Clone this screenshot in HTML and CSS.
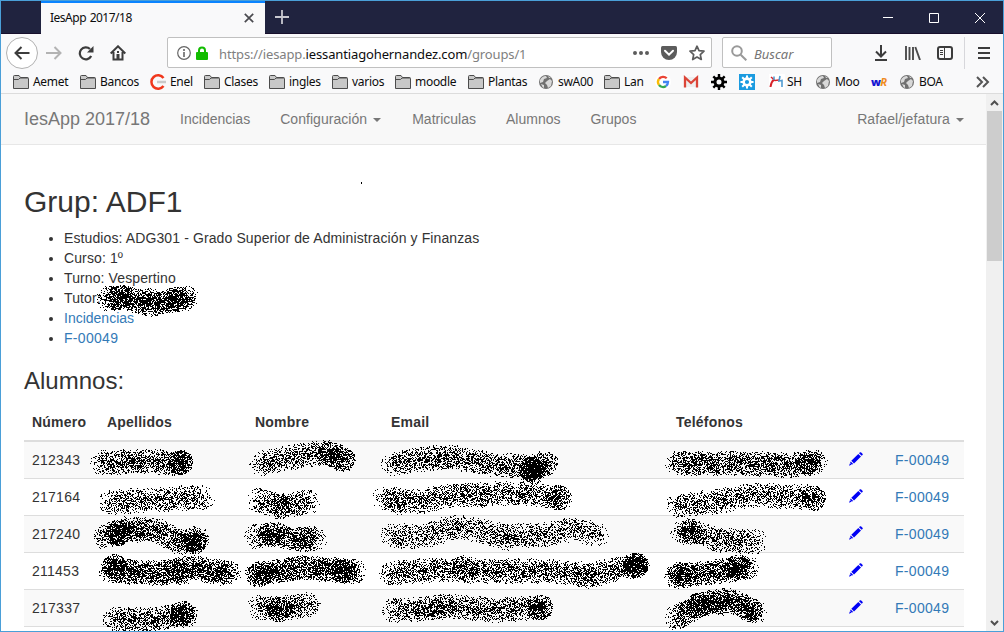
FILE: index.html
```html
<!DOCTYPE html>
<html lang="es">
<head>
<meta charset="utf-8">
<title>IesApp 2017/18</title>
<link rel="stylesheet" href="styles.css">
</head>
<body>
<svg class="defs" width="0" height="0">
  <symbol id="folder" viewBox="0 0 16 16"><path d="M.5 14.500V2.500Q.5 1.500 1.500 1.500H6L7.500 3.500H14.500Q15.500 3.500 15.500 4.500V14.500Z" fill="#c8c8c8" stroke="#4c4c4c"/><path d="M1 5.500H5.500L7 4H15" fill="none" stroke="#4c4c4c"/></symbol>
  <symbol id="globe" viewBox="0 0 16 16"><circle cx="8" cy="8" r="7" fill="#707070"/><path d="M2 6Q4 2 8 2L9 4 6 5 5 8 2 9ZM9 7L12 5 14 7 13 12 10 14 9 11 7 9ZM3 10L6 11 6 14Q4 13 3 10ZM10 2L13 4 11 4Z" fill="#d8d8d8"/></symbol>
  <symbol id="gear" viewBox="0 0 16 16"><circle cx="8" cy="8" r="4" fill="none" stroke="currentColor" stroke-width="3"/><path d="M8 0V4M8 12V16M0 8H4M12 8H16M2.300 2.300L5 5M11 11L13.700 13.700M2.300 13.700L5 11M11 5L13.700 2.300" stroke="currentColor" stroke-width="2.400"/></symbol>
  <symbol id="pencil" viewBox="0 0 14 14"><path d="M2.300 8.700L9.300 1.900 12 4.600 5 11.500ZM10 1.200L11 .3Q11.600 -.1 12.200 .5L13.500 1.800Q14 2.400 13.500 3L12.700 3.800ZM1.700 9.500L4.200 12 0 13.800Z" fill="#0000f5"/><path d="M1.500 11.500L2.500 12.500" stroke="#fff" stroke-width=".8"/></symbol>
</svg>
<div class="window">
  <div class="tabbar">
    <div class="tab"><span class="tab-title">IesApp 2017/18</span><svg width="10" height="10"><path d="M.8 .8L9.200 9.200M9.200 .8L.8 9.200" stroke="#4a4a4f" stroke-width="1.700"/></svg></div>
    <svg class="newtab" width="14" height="14"><path d="M7 0V14M0 7H14" stroke="#c8c8d0" stroke-width="1.800"/></svg>
    <div class="controls">
      <svg width="10" height="10"><path d="M0 4.500H10" stroke="#fff"/></svg>
      <svg width="10" height="10"><path d="M.5 .5H9.500V9.500H.5Z" fill="none" stroke="#fff"/></svg>
      <svg width="10" height="10"><path d="M0 0L10 10M10 0L0 10" stroke="#fff"/></svg>
    </div>
  </div>
  <div class="toolbar">
    <span class="back"><svg width="16" height="16"><path d="M15.500 8H1.500M7.500 2L1.500 8 7.500 14" fill="none" stroke="#3c3c3c" stroke-width="2"/></svg></span>
    <svg class="forward" width="16" height="16"><path d="M0 8H14.500M8.500 2L14.500 8 8.500 14" fill="none" stroke="#b3b3b3" stroke-width="2"/></svg>
    <svg class="reload" width="16" height="16"><path d="M13.200 11A6 6 0 1 1 12 4" fill="none" stroke="#3c3c3c" stroke-width="2.200"/><path d="M15.500 1V7.500H9Z" fill="#3c3c3c"/></svg>
    <svg class="home" width="16" height="16"><path d="M.7 8.500L8 1.300 15.300 8.500M3.500 7V14.500H12.500V7" fill="none" stroke="#3c3c3c" stroke-width="2"/><path d="M6.500 14V9H9.500V14M7 6H9V8H7Z" fill="#3c3c3c"/></svg>
    <div class="urlbar">
      <svg width="14" height="14"><circle cx="7" cy="7" r="6.300" fill="none" stroke="#666" stroke-width="1.200"/><path d="M7 3V5M7 6V11" stroke="#666" stroke-width="1.600"/></svg>
      <svg class="lock" width="12" height="14"><path d="M3 7V4.500A3 3 0 0 1 9 4.500V7" fill="none" stroke="#12bc00" stroke-width="2"/><rect y="6" width="12" height="8" rx="1" fill="#12bc00"/></svg>
      <span class="url">https://iesapp.<b>iessantiagohernandez.com</b>/groups/1</span>
      <svg class="dots" width="16" height="4"><path d="M0 2A2 2 0 0 1 4 2 2 2 0 0 1 0 2M6 2A2 2 0 0 1 10 2 2 2 0 0 1 6 2M12 2A2 2 0 0 1 16 2 2 2 0 0 1 12 2" fill="#5c5c5c"/></svg>
      <svg class="pocket" width="16" height="14"><path d="M1.500 0H14.500Q16 0 16 1.500V6A8 8 0 0 1 0 6V1.500Q0 0 1.500 0Z" fill="#5c5c5c"/><path d="M4 4.800L8 8.600 12 4.800" fill="none" stroke="#fff" stroke-width="2" stroke-linecap="round"/></svg>
      <svg width="16" height="16"><path d="M8 1.200L10 5.700 15 6.200 11.300 9.600 12.300 14.500 8 12 3.700 14.500 4.700 9.600 1 6.200 6 5.700Z" fill="none" stroke="#5c5c5c" stroke-width="1.700" stroke-linejoin="round"/></svg>
    </div>
    <div class="search"><svg width="16" height="16"><circle cx="6" cy="6" r="4.800" fill="none" stroke="#999" stroke-width="2"/><path d="M9.700 9.700L15.300 15.300" stroke="#999" stroke-width="2"/></svg><i>Buscar</i></div>
    <svg class="download" width="14" height="16"><path d="M7 0V11M2 6.500L7 11.500 12 6.500M1 15H13" fill="none" stroke="#3c3c3c" stroke-width="2"/></svg>
    <svg class="library" width="16" height="14"><path d="M1 0V14M4.500 1V14M8 1V14M10.300 1L15 14" stroke="#4c4c4c" stroke-width="1.900"/></svg>
    <svg class="sidebar" width="16" height="14"><rect x="1" y="1" width="14" height="12" rx="2" fill="none" stroke="#3c3c3c" stroke-width="2"/><path d="M7.500 1V13M3 4.500H6M3 6.500H6M3 8.500H6" stroke="#3c3c3c"/></svg>
    <span class="separator"></span>
    <svg class="menu" width="12" height="12"><path d="M0 1H12M0 6H12M0 11H12" stroke="#3c3c3c" stroke-width="2"/></svg>
  </div>
  <div class="bookmarks">
    <span><svg><use href="#folder"/></svg>Aemet</span>
    <span><svg><use href="#folder"/></svg>Bancos</span>
    <span><svg viewBox="0 0 16 16"><path d="M13.500 12A6.700 6.700 0 1 1 13.500 4" fill="none" stroke="#f0371c" stroke-width="2.500"/><path d="M7 8H16" stroke="#c9c9c9" stroke-width="2.500"/></svg>Enel</span>
    <span><svg><use href="#folder"/></svg>Clases</span>
    <span><svg><use href="#folder"/></svg>ingles</span>
    <span><svg><use href="#folder"/></svg>varios</span>
    <span><svg><use href="#folder"/></svg>moodle</span>
    <span><svg><use href="#folder"/></svg>Plantas</span>
    <span><svg><use href="#globe"/></svg>swA00</span>
    <span><svg><use href="#folder"/></svg>Lan</span>
    <span><svg viewBox="0 0 16 16"><circle cx="8" cy="8" r="8" fill="#fff"/><g fill="none" stroke-width="2.300"><path d="M4 5A5 5 0 0 1 11.700 4.300" stroke="#ea4335"/><path d="M4 5A5 5 0 0 0 4 11" stroke="#fbbc05"/><path d="M4 11A5 5 0 0 0 11 12" stroke="#34a853"/><path d="M11 12A5 5 0 0 0 13 8H8" stroke="#4285f4"/></g></svg></span>
    <span><svg viewBox="0 0 16 16"><path d="M1 3H15V13H1Z" fill="#eee"/><path d="M2 13.500V3.500L8 9 14 3.500V13.500" fill="none" stroke="#db4437" stroke-width="2.300"/></svg></span>
    <span><svg class="gear-dark"><use href="#gear"/></svg></span>
    <span><svg class="gear-blue" viewBox="-1.500 -1.500 19 19"><use href="#gear" width="16" height="16"/></svg></span>
    <span class="school"><svg viewBox="0 0 16 16"><path d="M0 0H16V16H0Z" fill="#fff"/><path d="M1.500 13Q2 8 5 5.500" fill="none" stroke="#d8232a" stroke-width="2"/><path d="M2 3L6 6.500 10 6" fill="none" stroke="#d8232a" stroke-width="1.500"/><path d="M5 2.500V6M11 2L10 7 13 6.500V13" fill="none" stroke="#519bd1" stroke-width="1.600"/></svg>SH</span>
    <span><svg><use href="#globe"/></svg>Moo</span>
    <span class="wr"><b>w</b><em>R</em></span>
    <span><svg><use href="#globe"/></svg>BOA</span>
    <svg class="overflow" viewBox="0 0 14 12"><path d="M1 1L6 6 1 11M7 1L12 6 7 11" fill="none" stroke="#555" stroke-width="2"/></svg>
  </div>
  <div class="viewport">
    <div class="page">
      <nav class="navbar">
        <a class="brand">IesApp 2017/18</a><a>Incidencias</a><a class="config">Configuración<s class="caret"></s></a><a>Matriculas</a><a>Alumnos</a><a>Grupos</a><a class="user">Rafael/jefatura<s class="caret"></s></a>
      </nav>
      <main class="content">
        <h2>Grup: ADF1</h2>
        <ul>
          <li>Estudios: ADG301 - Grado Superior de Administración y Finanzas</li>
          <li>Curso: 1º</li>
          <li>Turno: Vespertino</li>
          <li>Tutor:</li>
          <li><a class="incidents">Incidencias</a></li>
          <li><a class="form">F-00049</a></li>
        </ul>
        <h3>Alumnos:</h3>
        <table>
          <colgroup><col class="c-num"><col class="c-last"><col class="c-first"><col class="c-mail"><col class="c-tel"><col class="c-edit"><col></colgroup>
          <thead><tr><th>Número</th><th>Apellidos</th><th>Nombre</th><th>Email</th><th>Teléfonos</th><th></th><th></th></tr></thead>
          <tbody>
            <tr><td>212343</td><td></td><td></td><td></td><td></td><td><svg class="pencil"><use href="#pencil"/></svg></td><td><a class="form">F-00049</a></td></tr>
            <tr><td>217164</td><td></td><td></td><td></td><td></td><td><svg class="pencil"><use href="#pencil"/></svg></td><td><a class="form">F-00049</a></td></tr>
            <tr><td>217240</td><td></td><td></td><td></td><td></td><td><svg class="pencil"><use href="#pencil"/></svg></td><td><a class="form">F-00049</a></td></tr>
            <tr><td>211453</td><td></td><td></td><td></td><td></td><td><svg class="pencil"><use href="#pencil"/></svg></td><td><a class="form">F-00049</a></td></tr>
            <tr><td>217337</td><td></td><td></td><td></td><td></td><td><svg class="pencil"><use href="#pencil"/></svg></td><td><a class="form">F-00049</a></td></tr>
            <tr><td></td><td></td><td></td><td></td><td></td><td></td><td></td></tr>
          </tbody>
        </table>
      </main>
    </div>
    <div class="scrollbar">
      <svg width="9" height="6"><path d="M1 5L4.500 1.500 8 5" fill="none" stroke="#505050" stroke-width="2"/></svg>
      <div class="thumb"></div>
      <svg class="down" width="9" height="6"><path d="M1 1L4.500 4.500 8 1" fill="none" stroke="#505050" stroke-width="2"/></svg>
    </div>
  </div>
</div>
<svg class="spray" width="1004" height="631" shape-rendering="crispEdges"><path id="ink"/></svg>
<script src="spray.js"></script>
</body>
</html>
```
FILE: styles.css
```css
* { box-sizing: border-box; }
body { margin: 0; background: #fff; font: 14px/20px "Liberation Sans", Arial, sans-serif; color: #333; overflow: hidden; }
svg { display: block; flex: none; }
.defs { position: absolute; }
.window { width: 1004px; height: 632px; border: 1px solid #4a9fd8; display: flex; flex-direction: column; overflow: hidden; }
.tabbar, .toolbar, .bookmarks { font-family: "Noto Sans", sans-serif; font-size: 12px; flex: none; display: flex; align-items: center; }
.tabbar { height: 33px; background: #20233f; border-bottom: 1px solid #170f2c; padding-left: 40px; }
.tab { height: 33px; width: 224px; background: #f9f9fa; border-top: 2px solid #0a84ff; display: flex; align-items: center; justify-content: space-between; padding: 0 11px 2px 9px; color: #0c0c0d; align-self: flex-start; }
.tab-title { letter-spacing: -.5px; word-spacing: 1px; }
.newtab { margin-left: 10px; }
.controls { margin-left: auto; display: flex; gap: 36px; margin-right: 18px; padding-top: 2px; }
.toolbar { height: 37px; background: #f9f9fa; padding-left: 5px; }
.back { width: 32px; height: 32px; border: 1px solid #b1b1b1; border-radius: 50%; background: #fff; display: grid; place-items: center; }
.forward { margin-left: 8px; }
.reload { margin-left: 16px; }
.home { margin-left: 16px; }
.urlbar { margin-left: 41px; width: 545px; height: 31px; border: 1px solid #c0c0c0; border-radius: 2px; background: #fff; display: flex; align-items: center; padding: 0 6px 0 9px; }
.lock { margin-left: 5px; }
.url { margin-left: 11px; padding-top: 2px; font-size: 13px; color: #808080; letter-spacing: -.13px; white-space: nowrap; }
.url b { font-weight: 400; color: #0c0c0d; }
.dots { margin-left: auto; }
.pocket { margin: 0 12px; }
.search { width: 110px; height: 31px; margin-left: 10px; border: 1px solid #c0c0c0; border-radius: 2px; background: #fff; display: flex; align-items: center; padding-left: 8px; gap: 7px; font-size: 13px; color: #757575; }
.search i { padding-top: 2px; }
.download { margin-left: 42px; }
.library { margin-left: 17px; }
.sidebar { margin-left: 16px; }
.separator { width: 1px; height: 32px; background: #d7d7db; margin-left: 11px; }
.menu { margin-left: 13px; }
.bookmarks { height: 23px; background: #f9f9fa; border-bottom: 1px solid #dcdcdc; display: grid; grid-template-columns: 67px 70px 54px 65px 63px 63px 73px 70px 66px 51px 28px 28px 28px 30px 46px 56px 28px 77px 14px; padding-left: 12px; color: #0c0c0d; }
.bookmarks span { display: flex; align-items: center; gap: 4px; white-space: nowrap; letter-spacing: -.3px; height: 22px; }
.bookmarks .school { gap: 2px; }
.bookmarks svg { width: 16px; height: 16px; }
.gear-dark { color: #000; }
.bookmarks .gear-blue { color: #fff; background: #1b9be0; }
.bookmarks .overflow { width: 14px; height: 12px; }
.bookmarks .wr { gap: 0; font-weight: 700; font-size: 11px; letter-spacing: -.8px; }
.wr b { color: #1414d2; }
.wr em { color: #f08c1e; }
.viewport { flex: 1; min-height: 0; display: flex; }
.page { width: 985px; overflow: hidden; }
.navbar { height: 51px; background: #f8f8f8; border-bottom: 1px solid #e7e7e7; display: flex; align-items: center; padding: 0 7px 0 8px; color: #777; }
.navbar a { padding: 0 15px; }
.navbar .brand { font-size: 18px; }
.navbar .config { padding-right: 16px; letter-spacing: .05px; }
.navbar .user { margin-left: auto; letter-spacing: .12px; }
.caret { display: inline-block; border: 4px solid transparent; border-top-color: #777; border-bottom: 0; margin-left: 6px; vertical-align: middle; }
.content { padding: 40px 22px 0 23px; }
h2, h3 { font-weight: 500; line-height: 1.1; margin: 0 0 10px; }
h2 { font-size: 30px; }
h3 { font-size: 24px; line-height: 26px; margin-top: 20px; }
ul { margin: 0 0 10px; padding-left: 40px; letter-spacing: .11px; }
.content a { color: #337ab7; }
.content .incidents { letter-spacing: 0; }
.content .form { letter-spacing: .3px; }
table { width: 940px; table-layout: fixed; border-spacing: 0; }
.c-num { width: 75px; }
.c-last { width: 148px; }
.c-first { width: 136px; }
.c-mail { width: 285px; }
.c-tel { width: 173px; }
.c-edit { width: 46px; }
th { height: 38px; padding: 8px; text-align: left; border-bottom: 2px solid #ddd; letter-spacing: .22px; }
td { height: 37px; padding: 8px; border-top: 1px solid #ddd; letter-spacing: .25px; }
tbody tr:first-child td { border-top: 0; height: 36px; }
tbody tr:nth-child(odd) { background: #f9f9f9; }
.pencil { width: 14px; height: 14px; margin-top: -3px; }
.scrollbar { width: 17px; background: #f0f0f0; margin-left: auto; display: flex; flex-direction: column; align-items: center; padding: 6px 1px 5px 0; }
.thumb { width: 15px; height: 150px; background: #cdcdcd; margin-top: 5px; }
.down { margin-top: auto; }
.spray { position: absolute; left: 0; top: 0; pointer-events: none; }
```
FILE: spray.js
```javascript
// Airbrush strokes: each is a polyline of [x, y] centres with a dot density.
const strokes = [
  [1.3, [108,298],[125,297],[150,304],[186,298]],
  [1, [102,462],[150,461],[179,463]],
  [.9, [261,463],[300,455],[325,452],[343,458]],
  [.9, [393,463],[425,458],[455,457],[490,464],[530,467],[542,463],[530,473]],
  [1.1, [677,463],[740,463],[790,465],[815,462]],
  [.8, [109,502],[150,499],[202,497]],
  [.9, [259,500],[280,506],[308,501]],
  [.8, [384,498],[420,501],[450,495],[490,493],[530,493],[560,498]],
  [.8, [677,505],[710,502],[750,495],[790,496],[812,497]],
  [1.1, [105,536],[125,528],[155,529],[180,542],[197,538]],
  [1, [256,536],[275,534],[300,539],[314,538]],
  [.7, [392,535],[420,537],[455,526],[500,535],[540,535],[575,528],[596,535]],
  [.8, [682,532],[700,534],[720,540],[755,541]],
  [1.4, [110,570],[160,573],[190,567],[228,573]],
  [1.5, [257,574],[300,567],[353,571]],
  [.9, [391,573],[440,569],[490,571],[550,570],[590,575],[620,568],[637,565]],
  [1.3, [676,576],[710,572],[746,567]],
  [1, [113,619],[150,619],[186,614]],
  [1, [259,607],[280,608],[308,604]],
  [.9, [393,610],[450,606],[500,610],[539,607]],
  [1.2, [676,617],[700,604],[730,599],[754,612]]
];
// Places where the airbrush lingered: x, y, dot count.
const spots = [[120,297,260],[150,300,150],[175,298,240],[180,462,500],[328,453,200],[342,459,260],[531,469,650],[545,463,200],[809,462,250],[280,506,180],
  [400,502,80],[480,495,100],[558,497,250],[813,498,250],[118,533,500],[135,530,150],[194,541,400],[271,534,260],[305,539,200],[505,538,120],
  [690,530,260],[114,566,380],[180,574,100],[217,573,150],[260,573,250],[343,570,250],[464,567,180],[635,565,700],[585,576,120],
  [737,567,300],[680,574,260],[182,613,420],[279,609,260],[440,606,160],[540,607,380],[699,605,380],[720,603,200],[750,609,220]];
let seed = 20171;
const rnd = () => (seed = (seed * 48271) % 2147483647) / 2147483647;
const cells = new Set();
const radius = 12.5;
function dot(x, y) {
  const a = rnd() * Math.PI * 2;
  const r = Math.pow(rnd(), .62) * radius;
  cells.add(Math.round(x + Math.cos(a) * r) + " " + Math.round(y + Math.sin(a) * r));
}
for (const [density, ...pts] of strokes) {
  for (let i = 1; i < pts.length; i++) {
    const [x0, y0] = pts[i - 1], [x1, y1] = pts[i];
    const n = Math.hypot(x1 - x0, y1 - y0) * 16 * density;
    for (let k = 0; k < n; k++) {
      const t = rnd();
      dot(x0 + (x1 - x0) * t, y0 + (y1 - y0) * t);
    }
  }
  for (const p of [pts[0], pts[pts.length - 1]]) for (let k = 0; k < 60 * density; k++) dot(p[0], p[1]);
}
for (const [x, y, n] of spots) for (let k = 0; k < n; k++) dot(x, y);
cells.add("361 182");
cells.add("361 183");
document.getElementById("ink").setAttribute("d", [...cells].map(c => "M" + c + "h1v1h-1z").join(""));
```
